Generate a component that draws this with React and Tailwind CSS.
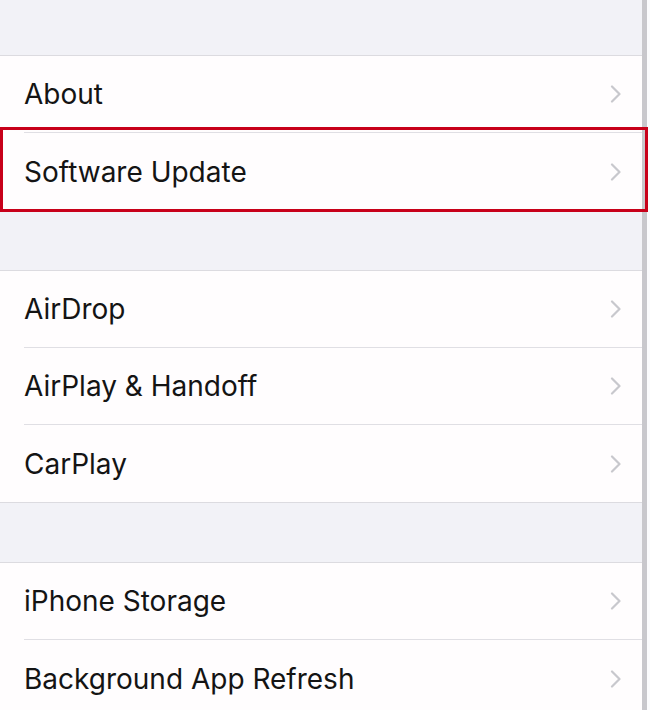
const groups = [
  ["About", "Software Update"],
  ["AirDrop", "AirPlay & Handoff", "CarPlay"],
  ["iPhone Storage", "Background App Refresh"],
];

function Chevron() {
  return (
    <svg width="12" height="18" viewBox="0 0 12 18" className="mr-[20px] shrink-0">
      <path
        d="M2 1.5 L9.5 9 L2 16.5"
        fill="none"
        stroke="#c8c8cd"
        strokeWidth="2.2"
        strokeLinecap="round"
        strokeLinejoin="round"
      />
    </svg>
  );
}

function Row({ label, last }) {
  return (
    <div className="flex h-[77px] flex-col bg-[#fffdfe]">
      <div className="flex flex-1 items-center pl-[24px]">
        <span className="flex-1 text-[28px] leading-none text-[#141414] [font-family:Inter,'Liberation_Sans',sans-serif]">
          {label}
        </span>
        <Chevron />
      </div>
      {!last && <div className="ml-[24px] h-px bg-[#e0dfe4]" />}
    </div>
  );
}

const gaps = ["h-[55px]", "h-[59px]", "h-[59px]"];

export default function App() {
  return (
    <div className="relative flex h-[710px] w-[650px] overflow-hidden bg-[#f2f2f7]">
      <div className="flex-1">
        {groups.map((items, i) => (
          <div key={i}>
            <div className={gaps[i]} />
            <div className="border-y border-[#dcdbe0]">
              {items.map((label, j) => (
                <Row key={label} label={label} last={j === items.length - 1} />
              ))}
            </div>
          </div>
        ))}
      </div>
      {/* scroll track on the right edge */}
      <div className="w-[5px] bg-[#c8c7cc]" />
      <div className="w-[3px] bg-[#fbfbfd]" />

      {/* highlight around Software Update */}
      <div className="absolute left-0 top-[127px] h-[85px] w-[648px] border-[3px] border-[#c8001a]" />
    </div>
  );
}
